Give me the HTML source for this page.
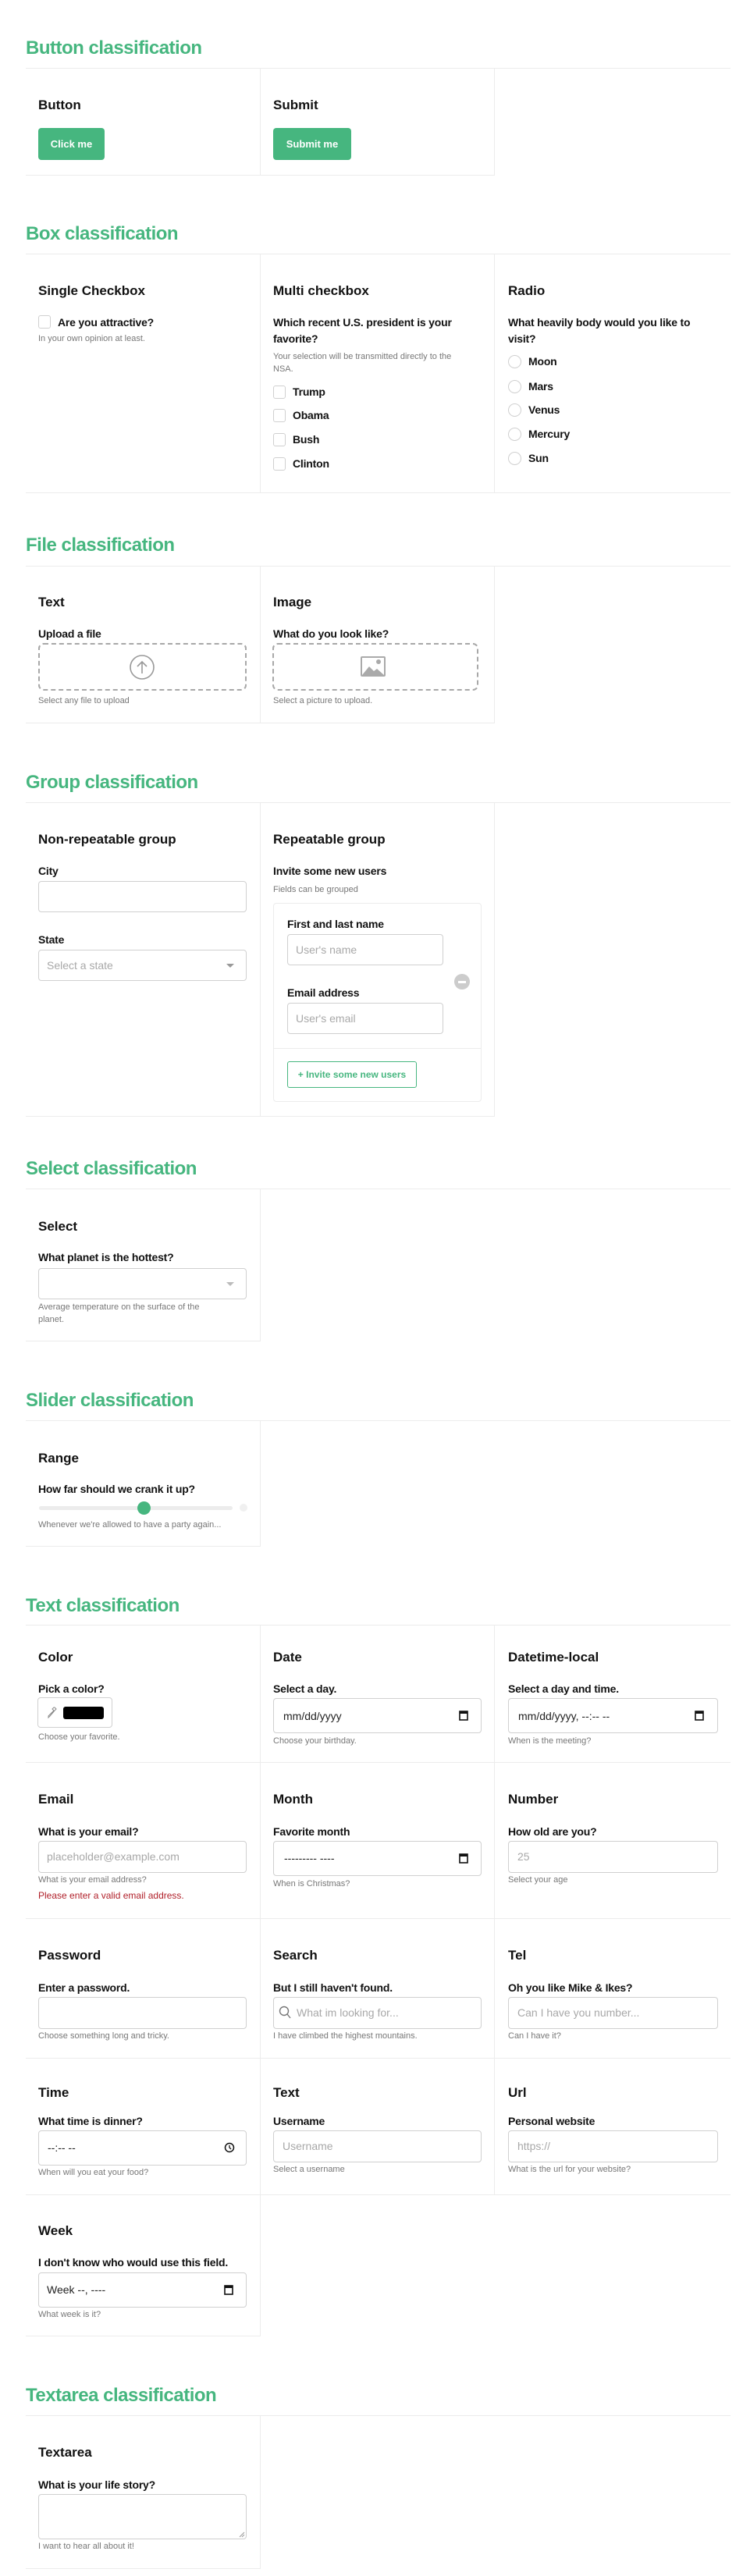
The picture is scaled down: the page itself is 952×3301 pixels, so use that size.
<!DOCTYPE html>
<html><head><meta charset="utf-8">
<style>
*{box-sizing:border-box;margin:0;padding:0}
body{width:952px;height:3301px;position:relative;background:#fff;font-family:"Liberation Sans",sans-serif;color:#111;overflow:hidden}
div,span{position:absolute}
.t{font-size:24px;line-height:30px;font-weight:bold;color:#46b67f;left:33px;letter-spacing:-0.5px;white-space:nowrap}
.ln{left:33px;width:903px;height:1px;background:#ececec}
.c{border-right:1px solid #ececec;border-bottom:1px solid #ececec;width:301px}
.h{font-size:17px;line-height:20px;font-weight:bold;white-space:nowrap}
.l{font-size:14px;line-height:18px;font-weight:bold;white-space:nowrap;letter-spacing:-0.2px}
.s{font-size:11px;line-height:14px;color:#777;white-space:nowrap}
.in{border:1px solid #d0d0d0;border-radius:4px;background:#fff}
.ph{font-size:14px;color:#a8a8a8;white-space:nowrap;line-height:18px}
.v{font-size:14px;color:#222;white-space:nowrap;line-height:18px}
.cb{width:16px;height:17px;border:1px solid #d0d0d0;border-radius:3px}
.rd{width:17px;height:17px;border:1px solid #d0d0d0;border-radius:50%}
.btn{background:#46b67f;border-radius:4px;color:#fff;font-size:13px;font-weight:bold;text-align:center;line-height:41px;height:41px}
.arr{width:0;height:0;border-left:5px solid transparent;border-right:5px solid transparent;border-top:5px solid #999}
</style></head><body>

<!-- Button -->
<div class="t" style="top:47px">Button classification</div>
<div class="ln" style="top:87px"></div>
<div class="c" style="left:33px;top:88px;height:137px"></div>
<div class="c" style="left:333px;top:88px;height:137px"></div>
<div class="h" style="left:49px;top:125px">Button</div>
<div class="btn" style="left:49px;top:164px;width:85px">Click me</div>
<div class="h" style="left:350px;top:125px">Submit</div>
<div class="btn" style="left:350px;top:164px;width:100px">Submit me</div>

<!-- Box -->
<div class="t" style="top:285px">Box classification</div>
<div class="ln" style="top:325px"></div>
<div class="c" style="left:33px;top:326px;height:306px"></div>
<div class="c" style="left:333px;top:326px;height:306px"></div>
<div class="c" style="left:634px;top:326px;height:306px;width:302px;border-right:none"></div>
<div class="h" style="left:49px;top:363px">Single Checkbox</div>
<div class="cb" style="left:49px;top:404px"></div>
<div class="l" style="left:74px;top:404px">Are you attractive?</div>
<div class="s" style="left:49px;top:427px">In your own opinion at least.</div>

<div class="h" style="left:350px;top:363px">Multi checkbox</div>
<div class="l" style="left:350px;top:404px">Which recent U.S. president is your</div>
<div class="l" style="left:350px;top:425px">favorite?</div>
<div class="s" style="left:350px;top:450px">Your selection will be transmitted directly to the</div>
<div class="s" style="left:350px;top:466px">NSA.</div>
<div class="cb" style="left:350px;top:494px"></div><div class="l" style="left:375px;top:493px">Trump</div>
<div class="cb" style="left:350px;top:524px"></div><div class="l" style="left:375px;top:523px">Obama</div>
<div class="cb" style="left:350px;top:555px"></div><div class="l" style="left:375px;top:554px">Bush</div>
<div class="cb" style="left:350px;top:586px"></div><div class="l" style="left:375px;top:585px">Clinton</div>

<div class="h" style="left:651px;top:363px">Radio</div>
<div class="l" style="left:651px;top:404px">What heavily body would you like to</div>
<div class="l" style="left:651px;top:425px">visit?</div>
<div class="rd" style="left:651px;top:455px"></div><div class="l" style="left:677px;top:454px">Moon</div>
<div class="rd" style="left:651px;top:487px"></div><div class="l" style="left:677px;top:486px">Mars</div>
<div class="rd" style="left:651px;top:517px"></div><div class="l" style="left:677px;top:516px">Venus</div>
<div class="rd" style="left:651px;top:548px"></div><div class="l" style="left:677px;top:547px">Mercury</div>
<div class="rd" style="left:651px;top:579px"></div><div class="l" style="left:677px;top:578px">Sun</div>

<!-- File -->
<div class="t" style="top:684px">File classification</div>
<div class="ln" style="top:725px"></div>
<div class="c" style="left:33px;top:726px;height:201px"></div>
<div class="c" style="left:333px;top:726px;height:201px"></div>
<div class="h" style="left:49px;top:762px">Text</div>
<div class="l" style="left:49px;top:803px">Upload a file</div>
<div style="left:49px;top:824px;width:267px;height:61px;border:2px dashed #a8a8a8;border-radius:7px"></div>
<svg style="position:absolute;left:165px;top:838px" width="34" height="34" viewBox="0 0 34 34"><circle cx="17" cy="17" r="15" fill="none" stroke="#999" stroke-width="1.6"/><path d="M17 25V10M11 16l6-6 6 6" fill="none" stroke="#999" stroke-width="1.6"/></svg>
<div class="s" style="left:49px;top:891px">Select any file to upload</div>
<div class="h" style="left:350px;top:762px">Image</div>
<div class="l" style="left:350px;top:803px">What do you look like?</div>
<div style="left:349px;top:824px;width:264px;height:61px;border:2px dashed #a8a8a8;border-radius:7px"></div>
<svg style="position:absolute;left:462px;top:841px" width="32" height="26" viewBox="0 0 32 26"><rect x="0" y="0" width="32" height="26" rx="2" fill="#aaa"/><rect x="2" y="2" width="28" height="22" fill="#fff"/><path d="M2 24L11 13l6 6 4-3 9 8z" fill="#aaa"/><circle cx="23" cy="7" r="3" fill="#aaa"/></svg>
<div class="s" style="left:350px;top:891px">Select a picture to upload.</div>

<!-- Group -->
<div class="t" style="top:988px">Group classification</div>
<div class="ln" style="top:1028px"></div>
<div class="c" style="left:33px;top:1029px;height:402px"></div>
<div class="c" style="left:333px;top:1029px;height:402px"></div>
<div class="h" style="left:49px;top:1066px">Non-repeatable group</div>
<div class="l" style="left:49px;top:1107px">City</div>
<div class="in" style="left:49px;top:1129px;width:267px;height:40px"></div>
<div class="l" style="left:49px;top:1195px">State</div>
<div class="in" style="left:49px;top:1217px;width:267px;height:40px"></div>
<div class="ph" style="left:60px;top:1228px">Select a state</div>
<div class="arr" style="left:290px;top:1235px"></div>
<div class="h" style="left:350px;top:1066px">Repeatable group</div>
<div class="l" style="left:350px;top:1107px">Invite some new users</div>
<div class="s" style="left:350px;top:1133px">Fields can be grouped</div>
<div style="left:350px;top:1157px;width:267px;height:255px;border:1px solid #ececec;border-radius:4px"></div>
<div class="l" style="left:368px;top:1175px">First and last name</div>
<div class="in" style="left:368px;top:1197px;width:200px;height:40px"></div>
<div class="ph" style="left:379px;top:1208px">User's name</div>
<div class="l" style="left:368px;top:1263px">Email address</div>
<div class="in" style="left:368px;top:1285px;width:200px;height:40px"></div>
<div class="ph" style="left:379px;top:1296px">User's email</div>
<div style="left:582px;top:1248px;width:20px;height:20px;border-radius:50%;background:#ccc"></div>
<div style="left:587px;top:1257px;width:10px;height:3px;background:#fff"></div>
<div style="left:351px;top:1343px;width:265px;height:1px;background:#ececec"></div>
<div style="left:368px;top:1360px;width:166px;height:34px;border:1px solid #46b67f;border-radius:3px;color:#46b67f;font-size:12px;font-weight:bold;line-height:32px;text-align:center;white-space:nowrap">+ Invite some new users</div>

<!-- Select -->
<div class="t" style="top:1483px">Select classification</div>
<div class="ln" style="top:1523px"></div>
<div class="c" style="left:33px;top:1524px;height:195px"></div>
<div class="h" style="left:49px;top:1562px">Select</div>
<div class="l" style="left:49px;top:1602px">What planet is the hottest?</div>
<div class="in" style="left:49px;top:1625px;width:267px;height:40px"></div>
<div class="arr" style="left:290px;top:1643px;border-top-color:#bbb"></div>
<div class="s" style="left:49px;top:1668px">Average temperature on the surface of the</div>
<div class="s" style="left:49px;top:1684px">planet.</div>

<!-- Slider -->
<div class="t" style="top:1780px">Slider classification</div>
<div class="ln" style="top:1820px"></div>
<div class="c" style="left:33px;top:1821px;height:161px"></div>
<div class="h" style="left:49px;top:1859px">Range</div>
<div class="l" style="left:49px;top:1899px">How far should we crank it up?</div>
<div style="left:50px;top:1930px;width:248px;height:5px;border-radius:3px;background:#ececec"></div>
<div style="left:176px;top:1924px;width:17px;height:17px;border-radius:50%;background:#46b67f"></div>
<div style="left:307px;top:1927px;width:10px;height:10px;border-radius:50%;background:#f0f0f0"></div>
<div class="s" style="left:49px;top:1947px">Whenever we're allowed to have a party again...</div>

<!-- Text -->
<div class="t" style="top:2043px">Text classification</div>
<div class="ln" style="top:2082px"></div>
<div class="c" style="left:33px;top:2083px;height:176px"></div>
<div class="c" style="left:333px;top:2083px;height:176px"></div>
<div class="c" style="left:634px;top:2083px;height:176px;width:302px;border-right:none"></div>
<div class="c" style="left:33px;top:2258px;height:201px"></div>
<div class="c" style="left:333px;top:2258px;height:201px"></div>
<div class="c" style="left:634px;top:2258px;height:201px;width:302px;border-right:none"></div>
<div class="c" style="left:33px;top:2458px;height:180px"></div>
<div class="c" style="left:333px;top:2458px;height:180px"></div>
<div class="c" style="left:634px;top:2458px;height:180px;width:302px;border-right:none"></div>
<div class="c" style="left:33px;top:2637px;height:176px"></div>
<div class="c" style="left:333px;top:2637px;height:176px"></div>
<div class="c" style="left:634px;top:2637px;height:176px;width:302px;border-right:none"></div>
<div class="c" style="left:33px;top:2812px;height:182px"></div>

<!-- row1 -->
<div class="h" style="left:49px;top:2114px">Color</div>
<div class="l" style="left:49px;top:2155px">Pick a color?</div>
<div class="in" style="left:48px;top:2175px;width:96px;height:39px"></div>
<svg style="position:absolute;left:61px;top:2187px" width="12" height="16" viewBox="0 0 12 16"><path d="M9 1l2 2-2 2-6 7-2 2 0-2 7-7-2-2 2-2z" fill="none" stroke="#888" stroke-width="1"/></svg>
<div style="left:81px;top:2187px;width:52px;height:16px;border-radius:3px;background:#000"></div>
<div class="s" style="left:49px;top:2219px">Choose your favorite.</div>

<div class="h" style="left:350px;top:2114px">Date</div>
<div class="l" style="left:350px;top:2155px">Select a day.</div>
<div class="in" style="left:350px;top:2176px;width:267px;height:45px"></div>
<div class="v" style="left:363px;top:2190px">mm/dd/yyyy</div>
<svg style="position:absolute;left:588px;top:2191px" width="12" height="14" viewBox="0 0 12 14"><rect x="1" y="2" width="10" height="11" fill="none" stroke="#111" stroke-width="1.6"/><rect x="1" y="2" width="10" height="3" fill="#111"/></svg>
<div class="s" style="left:350px;top:2224px">Choose your birthday.</div>

<div class="h" style="left:651px;top:2114px">Datetime-local</div>
<div class="l" style="left:651px;top:2155px">Select a day and time.</div>
<div class="in" style="left:651px;top:2176px;width:269px;height:45px"></div>
<div class="v" style="left:664px;top:2190px">mm/dd/yyyy, --:-- --</div>
<svg style="position:absolute;left:890px;top:2191px" width="12" height="14" viewBox="0 0 12 14"><rect x="1" y="2" width="10" height="11" fill="none" stroke="#111" stroke-width="1.6"/><rect x="1" y="2" width="10" height="3" fill="#111"/></svg>
<div class="s" style="left:651px;top:2224px">When is the meeting?</div>

<!-- row2 -->
<div class="h" style="left:49px;top:2296px">Email</div>
<div class="l" style="left:49px;top:2338px">What is your email?</div>
<div class="in" style="left:49px;top:2359px;width:267px;height:41px"></div>
<div class="ph" style="left:60px;top:2370px">placeholder@example.com</div>
<div class="s" style="left:49px;top:2402px">What is your email address?</div>
<div style="left:49px;top:2421px;font-size:12px;line-height:16px;color:#b0202a;white-space:nowrap">Please enter a valid email address.</div>

<div class="h" style="left:350px;top:2296px">Month</div>
<div class="l" style="left:350px;top:2338px">Favorite month</div>
<div class="in" style="left:350px;top:2359px;width:267px;height:45px"></div>
<div class="v" style="left:364px;top:2372px">--------- ----</div>
<svg style="position:absolute;left:588px;top:2374px" width="12" height="14" viewBox="0 0 12 14"><rect x="1" y="2" width="10" height="11" fill="none" stroke="#111" stroke-width="1.6"/><rect x="1" y="2" width="10" height="3" fill="#111"/></svg>
<div class="s" style="left:350px;top:2407px">When is Christmas?</div>

<div class="h" style="left:651px;top:2296px">Number</div>
<div class="l" style="left:651px;top:2338px">How old are you?</div>
<div class="in" style="left:651px;top:2359px;width:269px;height:41px"></div>
<div class="ph" style="left:663px;top:2370px">25</div>
<div class="s" style="left:651px;top:2402px">Select your age</div>

<!-- row3 -->
<div class="h" style="left:49px;top:2496px">Password</div>
<div class="l" style="left:49px;top:2538px">Enter a password.</div>
<div class="in" style="left:49px;top:2559px;width:267px;height:41px"></div>
<div class="s" style="left:49px;top:2602px">Choose something long and tricky.</div>

<div class="h" style="left:350px;top:2496px">Search</div>
<div class="l" style="left:350px;top:2538px">But I still haven't found.</div>
<div class="in" style="left:350px;top:2559px;width:267px;height:41px"></div>
<svg style="position:absolute;left:357px;top:2570px" width="16" height="18" viewBox="0 0 16 18"><circle cx="7" cy="7" r="5.5" fill="none" stroke="#777" stroke-width="1.4"/><path d="M11 11l4 5" stroke="#777" stroke-width="1.4"/></svg>
<div class="ph" style="left:380px;top:2570px">What im looking for...</div>
<div class="s" style="left:350px;top:2602px">I have climbed the highest mountains.</div>

<div class="h" style="left:651px;top:2496px">Tel</div>
<div class="l" style="left:651px;top:2538px">Oh you like Mike &amp; Ikes?</div>
<div class="in" style="left:651px;top:2559px;width:269px;height:41px"></div>
<div class="ph" style="left:663px;top:2570px">Can I have you number...</div>
<div class="s" style="left:651px;top:2602px">Can I have it?</div>

<!-- row4 -->
<div class="h" style="left:49px;top:2672px">Time</div>
<div class="l" style="left:49px;top:2709px">What time is dinner?</div>
<div class="in" style="left:49px;top:2730px;width:267px;height:45px"></div>
<div class="v" style="left:61px;top:2743px">--:-- --</div>
<svg style="position:absolute;left:287px;top:2745px" width="14" height="14" viewBox="0 0 14 14"><circle cx="7" cy="7" r="5.5" fill="none" stroke="#111" stroke-width="1.5"/><path d="M7 4v3l2 2" fill="none" stroke="#111" stroke-width="1.3"/></svg>
<div class="s" style="left:49px;top:2777px">When will you eat your food?</div>

<div class="h" style="left:350px;top:2672px">Text</div>
<div class="l" style="left:350px;top:2709px">Username</div>
<div class="in" style="left:350px;top:2730px;width:267px;height:41px"></div>
<div class="ph" style="left:362px;top:2741px">Username</div>
<div class="s" style="left:350px;top:2773px">Select a username</div>

<div class="h" style="left:651px;top:2672px">Url</div>
<div class="l" style="left:651px;top:2709px">Personal website</div>
<div class="in" style="left:651px;top:2730px;width:269px;height:41px"></div>
<div class="ph" style="left:663px;top:2741px">https://</div>
<div class="s" style="left:651px;top:2773px">What is the url for your website?</div>

<!-- week -->
<div class="h" style="left:49px;top:2849px">Week</div>
<div class="l" style="left:49px;top:2890px">I don't know who would use this field.</div>
<div class="in" style="left:49px;top:2912px;width:267px;height:45px"></div>
<div class="v" style="left:60px;top:2925px">Week --, ----</div>
<svg style="position:absolute;left:287px;top:2927px" width="12" height="14" viewBox="0 0 12 14"><rect x="1" y="2" width="10" height="11" fill="none" stroke="#111" stroke-width="1.6"/><rect x="1" y="2" width="10" height="3" fill="#111"/></svg>
<div class="s" style="left:49px;top:2959px">What week is it?</div>

<!-- Textarea -->
<div class="t" style="top:3055px">Textarea classification</div>
<div class="ln" style="top:3095px"></div>
<div class="c" style="left:33px;top:3096px;height:196px"></div>
<div class="h" style="left:49px;top:3133px">Textarea</div>
<div class="l" style="left:49px;top:3175px">What is your life story?</div>
<div class="in" style="left:49px;top:3196px;width:267px;height:58px"></div>
<svg style="position:absolute;left:306px;top:3244px" width="8" height="8" viewBox="0 0 8 8"><path d="M7 1L1 7M7 4L4 7" stroke="#999" stroke-width="1"/></svg>
<div class="s" style="left:49px;top:3256px">I want to hear all about it!</div>

</body></html>
